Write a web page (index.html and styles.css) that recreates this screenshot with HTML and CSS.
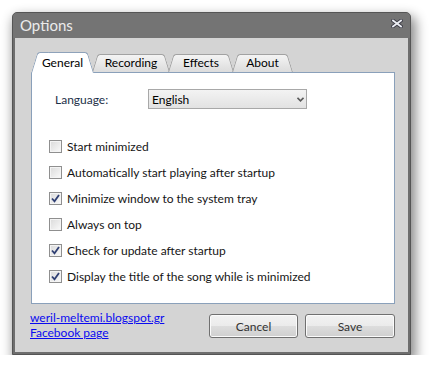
FILE: index.html
```html
<!DOCTYPE html>
<html lang="en">
<head>
    <meta charset="UTF-8">
    <title>Options</title>
    <link rel="stylesheet" href="styles.css">
</head>
<body>
    <div class="window"> <!-- the dialog frame -->
        <div class="titlebar">
            <span class="title">Options</span>
            <svg class="close" width="12" height="9" viewBox="0 0 12 9">
                <path d="M2 1.5 L10 7.5 M10 1.5 L2 7.5" stroke="#3d3d48" stroke-width="3.6" stroke-linecap="square"/>
                <path d="M2 1.5 L10 7.5 M10 1.5 L2 7.5" stroke="#eceef4" stroke-width="1.8" stroke-linecap="square"/>
            </svg>
        </div>
        <div class="content">
            <div class="tabs">
                <div class="tab selected tab-general">General</div>
                <div class="tab tab-recording">Recording</div>
                <div class="tab tab-effects">Effects</div>
                <div class="tab tab-about">About</div>
            </div>
            <div class="panel">
                <div class="lang-row">
                    <span class="lang-label">Language:</span>
                    <div class="select">
                        <span>English</span>
                        <svg width="7" height="5" viewBox="0 0 7 5">
                            <path d="M0.5 0.8 L3.5 3.8 L6.5 0.8" stroke="#5a5a5a" stroke-width="1.6" fill="none"/>
                        </svg>
                    </div>
                </div>
                <div class="checks">
                    <div class="check-row"><span class="box"></span>Start minimized</div>
                    <div class="check-row"><span class="box"></span>Automatically start playing after startup</div>
                    <div class="check-row"><span class="box checked"><svg width="11" height="11" viewBox="0 0 11 11"><path d="M2 5.5 L4.5 8.3 L9 2" stroke="#2f3f73" stroke-width="1.8" fill="none"/></svg></span>Minimize window to the system tray</div>
                    <div class="check-row"><span class="box"></span>Always on top</div>
                    <div class="check-row"><span class="box checked"><svg width="11" height="11" viewBox="0 0 11 11"><path d="M2 5.5 L4.5 8.3 L9 2" stroke="#2f3f73" stroke-width="1.8" fill="none"/></svg></span>Check for update after startup</div>
                    <div class="check-row"><span class="box checked"><svg width="11" height="11" viewBox="0 0 11 11"><path d="M2 5.5 L4.5 8.3 L9 2" stroke="#2f3f73" stroke-width="1.8" fill="none"/></svg></span>Display the title of the song while is minimized</div>
                </div>
            </div>
            <div class="footer">
                <div class="links">
                    <a href="#">weril-meltemi.blogspot.gr</a>
                    <a href="#">Facebook page</a>
                </div>
                <div class="buttons">
                    <button class="btn btn-cancel">Cancel</button>
                    <button class="btn btn-save">Save</button>
                </div>
            </div>
        </div>
    </div>
</body>
</html>
```

FILE: styles.css
```css
/* Options dialog, Windows 7 look */
body {
    margin: 0;
    background: white;
    font-family: "Segoe UI", Lato, "Open Sans", sans-serif;
    font-size: 12px;
}
.window {
    margin: 12px 0 0 12px;
    width: 399px;
    height: 343px;
    box-sizing: border-box;
    background: #6e6e6e;
    border: 1px solid #555;
    border-radius: 5px 5px 0 0;
    padding: 0 2px 2px 2px;
    display: flex;
    flex-direction: column;
    box-shadow: 3px 6px 12px 2px rgba(0, 0, 0, 0.45);
}
.titlebar {
    height: 25px;
    display: flex;
    align-items: center;
    justify-content: space-between;
    padding: 0 5px 0 5px;
    background: #747474;
    margin: 0 -2px;
    padding: 0 7px;
    border-radius: 4px 4px 0 0;
}
.title {
    color: #ebebeb;
    font-size: 15px;
    margin-top: -2px;
}
.close {
    margin-top: -4px;
}
.content {
    flex: 1;
    background: #d4d4d4;
    padding: 14px 13px 0 16px;
    display: flex;
    flex-direction: column;
}
.tabs {
    display: flex;
    align-items: flex-end;
    height: 20px;
    position: relative;
    z-index: 2;
}
.tab {
    position: relative;
    z-index: 1;
    height: 18px;
    line-height: 18px;
    text-align: center;
    color: #000;
    margin-left: -2px;
}
.tab::before,
.tab::after {
    content: '';
    position: absolute;
    top: 0;
    bottom: 0;
    width: 60%;
    border: 1px solid #a2a2a2;
    border-bottom: none;
    background: linear-gradient(#f4f4f4, #dcdcdc);
    z-index: -1;
}
.tab::before {
    left: 0;
    border-right: none;
    border-radius: 3px 0 0 0;
    transform: skewX(-17deg);
    transform-origin: bottom left;
}
.tab::after {
    right: 0;
    border-left: none;
    border-radius: 0 3px 0 0;
    transform: skewX(17deg);
    transform-origin: bottom right;
}
.tab.selected {
    z-index: 3;
    height: 21px;
    line-height: 21px;
    margin-bottom: -1px;
    margin-left: 0;
}
.tab.selected::before,
.tab.selected::after {
    background: white;
    border-color: #8ea2ba;
}
.tab-general { width: 63px; }
.tab-recording { width: 78px; }
.tab-effects { width: 66px; }
.tab-about { width: 61px; }
.panel {
    height: 232px;
    box-sizing: border-box;
    background: white;
    border: 1px solid #8aa0ba;
    padding: 16px 0 0 17px;
}
.lang-row {
    display: flex;
    align-items: center;
    height: 20px;
}
.lang-label {
    color: #1c3048;
    margin-left: 6px;
    width: 93px;
}
.select {
    width: 159px;
    height: 20px;
    box-sizing: border-box;
    border: 1px solid #a8a8a8;
    background: linear-gradient(#f3f3f3, #e2e2e2);
    display: flex;
    align-items: center;
    justify-content: space-between;
    padding: 0 2px 0 3px;
    color: #000;
}
.checks {
    margin-top: 24px;
}
.check-row {
    height: 26px;
    display: flex;
    align-items: center;
    color: #151515;
}
.box {
    width: 13px;
    height: 13px;
    box-sizing: border-box;
    border: 1px solid #8f8f8f;
    background: linear-gradient(135deg, #dadada, #fafafa);
    box-shadow: inset 0 0 0 1px #f4f4f4;
    margin-right: 5px;
    display: flex;
    align-items: center;
    justify-content: center;
}
.footer {
    display: flex;
    justify-content: space-between;
    padding-top: 6px;
}
.links {
    display: flex;
    flex-direction: column;
    margin-left: -1px;
}
.links a {
    color: #0a0af0;
    line-height: 15px;
}
.buttons {
    display: flex;
    gap: 7px;
    margin-top: 4px;
}
.btn {
    height: 24px;
    border: 1px solid #707070;
    border-radius: 3px;
    background: linear-gradient(#f2f2f2 0%, #ebebeb 50%, #dddddd 51%, #cfcfcf 100%);
    box-shadow: inset 0 0 0 1px #fbfbfb;
    font-family: inherit;
    font-size: 12px;
    color: #333;
    padding: 0;
}
.btn-cancel { width: 89px; }
.btn-save { width: 90px; }
```
